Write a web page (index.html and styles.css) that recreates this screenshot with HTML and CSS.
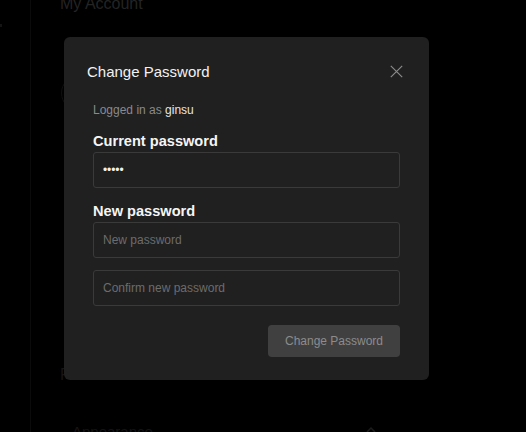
FILE: index.html
```html
<!DOCTYPE html>
<html>
<head>
<meta charset="utf-8">
<link rel="stylesheet" href="styles.css">
</head>
<body>
<div class="page">
  <aside class="sidebar"><span class="side-mark"></span></aside>
  <main class="main">
    <h1 class="page-title">My Account</h1>
    <div class="avatar"></div>
    <h2 class="section-title">Password</h2>
    <div class="row">
      <span class="row-label">Appearance</span>
      <svg class="row-icon" width="14" height="14" viewBox="0 0 14 14"><path d="M3 9 L7 5 L11 9" fill="none" stroke="#1c1c1c" stroke-width="1.5"/></svg>
    </div>
  </main>
</div>

<div class="overlay">
  <div class="modal">
    <div class="modal-header">
      <h3 class="modal-title">Change Password</h3>
      <svg class="close" width="13" height="13" viewBox="0 0 13 13"><path d="M0.8 0.8 L12.2 12.2 M12.2 0.8 L0.8 12.2" stroke="#8a8a8a" stroke-width="1.2" fill="none"/></svg>
    </div>
    <div class="modal-body">
      <p class="logged">Logged in as <span class="user">ginsu</span></p>
      <label class="label">Current password</label>
      <div class="input"><span class="dots">•••••</span></div>
      <label class="label label-new">New password</label>
      <div class="input"><span class="ph">New password</span></div>
      <div class="input input-gap"><span class="ph">Confirm new password</span></div>
      <div class="actions">
        <button class="btn">Change Password</button>
      </div>
    </div>
  </div>
</div>
</body>
</html>
```
FILE: styles.css
```css
html, body {
  margin: 0;
  padding: 0;
  background: #000;
  font-family: "Liberation Sans", Arial, sans-serif;
  overflow: hidden;
  width: 526px;
  height: 432px;
}

.page {
  display: flex;
  height: 432px;
  overflow: hidden;
}

.sidebar {
  width: 30px;
  border-right: 1px solid #0b0b0b;
}

.side-mark {
  display: block;
  margin-top: 24px;
  width: 2px;
  height: 3px;
  background: #141414;
}

.main {
  padding-left: 29px;
  flex: 1;
  display: flex;
  flex-direction: column;
}

.main > * {
  flex-shrink: 0;
}

.page-title {
  margin: -6px 0 0 0;
  font-size: 16px;
  font-weight: normal;
  color: #242424;
  line-height: 20px;
}

.avatar {
  margin-top: 61px;
  margin-left: 1px;
  width: 34px;
  height: 34px;
  border-radius: 50%;
  border: 1px solid #0f0f0f;
}

.section-title {
  margin: 254px 0 0 0;
  font-size: 16px;
  font-weight: normal;
  color: #161616;
  line-height: 20px;
}

.row {
  margin-top: 38px;
  padding-left: 12px;
  width: 306px;
  display: flex;
  justify-content: space-between;
  font-size: 15px;
  color: #141414;
  line-height: 18px;
}

.overlay {
  position: fixed;
  inset: 0;
  padding: 37px 0 0 64px;
}

.modal {
  width: 365px;
  height: 343px;
  background: #202020;
  border-radius: 6px;
  box-sizing: border-box;
}

.modal-header {
  display: flex;
  justify-content: space-between;
  align-items: center;
  padding: 25px 26px 0 23px;
}

.modal-title {
  margin: 0;
  font-size: 15px;
  font-weight: normal;
  color: #f2f2f2;
  line-height: 20px;
}

.close {
  display: block;
  margin-top: -2px;
}

.modal-body {
  padding: 20px 29px 0 29px;
  display: flex;
  flex-direction: column;
}

.logged {
  margin: 0;
  font-size: 12px;
  line-height: 16px;
  color: #8a8a8a;
}

.user {
  color: #e6e6e6;
}

.label {
  margin-top: 14px;
  font-size: 14.6px;
  font-weight: bold;
  color: #f5f5f5;
  line-height: 18px;
  margin-bottom: 2px;
}

.input {
  height: 36px;
  box-sizing: border-box;
  border: 1px solid #3a3a3a;
  border-radius: 3px;
  background: #202020;
  display: flex;
  align-items: center;
  padding-left: 9px;
  font-size: 12px;
}

.input-gap {
  margin-top: 12px;
}

.dots {
  color: #f0f0f0;
  font-size: 12px;
  letter-spacing: -0.1px;
}

.ph {
  color: #6c6c6c;
}

.actions {
  display: flex;
  justify-content: flex-end;
  margin-top: 19px;
}

.btn {
  width: 132px;
  height: 32px;
  border: none;
  border-radius: 4px;
  background: #404040;
  color: #8c8c8c;
  font-family: "Liberation Sans", Arial, sans-serif;
  font-size: 12px;
  padding: 0;
}
```
